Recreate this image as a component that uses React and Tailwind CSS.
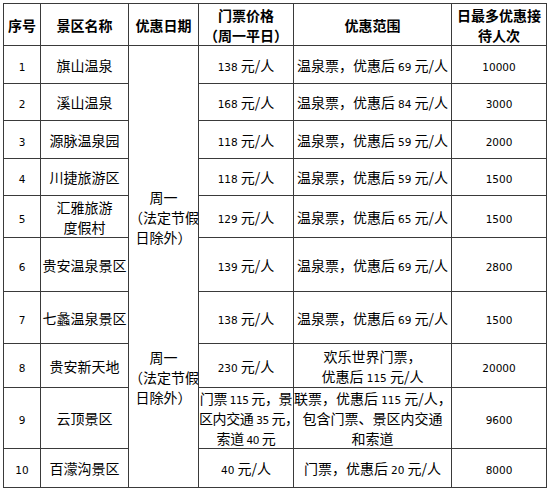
import React from "react";

const NUM = "font-['DejaVu_Sans',sans-serif] text-[10.5px] leading-none";

function T({ s }) {
  return s.split(/(\d+)/).map((p, i) =>
    /^\d+$/.test(p) ? (
      <span key={i} className={NUM}>
        {p}
      </span>
    ) : (
      <React.Fragment key={i}>{p}</React.Fragment>
    )
  );
}

function Lines({ lines, tight, lh }) {
  const base = tight ? "whitespace-nowrap tracking-[-0.4px]" : "whitespace-nowrap";
  return lines.map((l, i) => (
    <div key={i} className={lh ? base + " leading-[20px]" : base}>
      <T s={l} />
    </div>
  ));
}

const rows = [
  { h: 38, no: "1", name: ["旗山温泉"], price: ["138 元/人"], range: ["温泉票，优惠后 69 元/人"], max: "10000" },
  { h: 37, no: "2", name: ["溪山温泉"], price: ["168 元/人"], range: ["温泉票，优惠后 84 元/人"], max: "3000" },
  { h: 38, no: "3", name: ["源脉温泉园"], price: ["118 元/人"], range: ["温泉票，优惠后 59 元/人"], max: "2000" },
  { h: 37, no: "4", name: ["川捷旅游区"], price: ["118 元/人"], range: ["温泉票，优惠后 59 元/人"], max: "1500" },
  { h: 42, no: "5", name: ["汇雅旅游", "度假村"], nameLh: true, price: ["129 元/人"], range: ["温泉票，优惠后 65 元/人"], max: "1500" },
  { h: 54, no: "6", name: ["贵安温泉景区"], price: ["139 元/人"], range: ["温泉票，优惠后 69 元/人"], max: "2800" },
  { h: 52, no: "7", name: ["七蠡温泉景区"], price: ["138 元/人"], range: ["温泉票，优惠后 69 元/人"], max: "1500" },
  { h: 44, no: "8", name: ["贵安新天地"], price: ["230 元/人"], range: ["欢乐世界门票，", "优惠后 115 元/人"], rangeLh: true, max: "20000" },
  {
    h: 61,
    no: "9",
    name: ["云顶景区"],
    price: ["门票 115 元，景", "区内交通 35 元，", "索道 40 元"],
    tight: true,
    priceLh: true,
    range: ["联票，优惠后 115 元/人，", "包含门票、景区内交通", "和索道"],
    rangeLh: true,
    max: "9600",
  },
  { h: 39, no: "10", name: ["百濛沟景区"], price: ["40 元/人"], range: ["门票，优惠后 20 元/人"], max: "8000" },
];

const TD = "border border-[#3a3a3a] p-0 text-center align-middle";

export default function App() {
  return (
    <div className="w-[550px] h-[492px] bg-white pt-[3px] pl-[3px] font-['Noto_Sans_CJK_SC',sans-serif] text-[14px] text-black">
      <table className="table-fixed border-collapse w-[543px] leading-[18px]">
        <colgroup>
          <col className="w-[37px]" />
          <col className="w-[88px]" />
          <col className="w-[70px]" />
          <col className="w-[95px]" />
          <col className="w-[158px]" />
          <col className="w-[95px]" />
        </colgroup>
        <tbody>
          <tr className="h-[42px] font-bold leading-[20px]">
            <td className={TD}>序号</td>
            <td className={TD}>景区名称</td>
            <td className={TD}>优惠日期</td>
            <td className={TD}>
              <div className="whitespace-nowrap">门票价格</div>
              <div className="whitespace-nowrap">（周一平日）</div>
            </td>
            <td className={TD}>优惠范围</td>
            <td className={TD}>
              <div className="whitespace-nowrap">日最多优惠接</div>
              <div className="whitespace-nowrap">待人次</div>
            </td>
          </tr>
          {rows.map((r, i) => (
            <tr key={r.no} style={{ height: r.h }}>
              <td className={TD}>
                <span className={NUM}>{r.no}</span>
              </td>
              <td className={TD}>
                <Lines lines={r.name} lh={r.nameLh} />
              </td>
              {i === 0 && (
                <td rowSpan={10} className="border border-[#3a3a3a] p-0 align-top text-center">
                  <div className="flex flex-col pt-[141px] leading-[20px]">
                    <div>
                      <div>周一</div>
                      <div className="whitespace-nowrap">（法定节假</div>
                      <div className="whitespace-nowrap">日除外）</div>
                    </div>
                    <div className="mt-[100px]">
                      <div>周一</div>
                      <div className="whitespace-nowrap">（法定节假</div>
                      <div className="whitespace-nowrap">日除外）</div>
                    </div>
                  </div>
                </td>
              )}
              <td className={TD}>
                <Lines lines={r.price} tight={r.tight} lh={r.priceLh} />
              </td>
              <td className={TD}>
                <Lines lines={r.range} lh={r.rangeLh} />
              </td>
              <td className={TD}>
                <span className={NUM}>{r.max}</span>
              </td>
            </tr>
          ))}
        </tbody>
      </table>
    </div>
  );
}
